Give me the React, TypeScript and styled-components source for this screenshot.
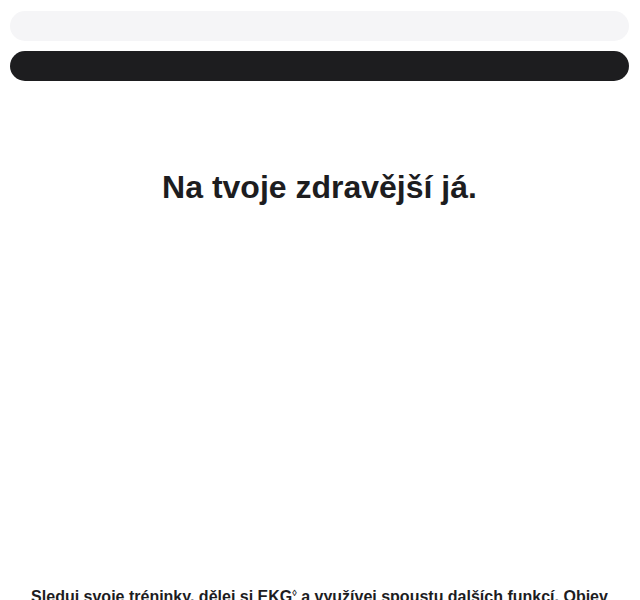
import styled, { createGlobalStyle } from 'styled-components';

const GlobalStyle = createGlobalStyle`
    body {
        margin: 0;
        background-color: #fff;
        font-family: "Liberation Sans", Arial, sans-serif;
        color: #1d1d1f;
    }
`;

const Page = styled.div`
    display: flex;
    flex-direction: column;
    padding: 11px 11px 0 10px;
`;

const Bar = styled.div<{ $dark?: boolean }>`
    height: 30px;
    border-radius: 15px;
    background-color: ${(p) => (p.$dark ? '#1d1d1f' : '#f5f5f7')};
    & + & {
        margin-top: 10px;
    }
`;

const Heading = styled.h1`
    margin: 88px 0 0;
    font-size: 32px;
    font-weight: 700;
    line-height: 36px;
    text-align: center;
`;

const Intro = styled.p`
    margin: 381px auto 0;
    max-width: 590px;
    font-size: 16px;
    font-weight: 700;
    line-height: 22px;
    text-align: center;
`;

const Sup = styled.sup`
    font-size: 9px;
    vertical-align: 6px;
    line-height: 0;
`;

export default function App() {
    return (
        <>
            <GlobalStyle />
            <Page>
                <Bar />
                <Bar $dark />
                <Heading>Na tvoje zdravější já.</Heading>
                <Intro>
                    Sleduj svoje tréninky, dělej si EKG<Sup>◊</Sup> a využívej spoustu
                    dalších funkcí. Objev nové možnosti péče o své zdraví.
                </Intro>
            </Page>
        </>
    );
}
